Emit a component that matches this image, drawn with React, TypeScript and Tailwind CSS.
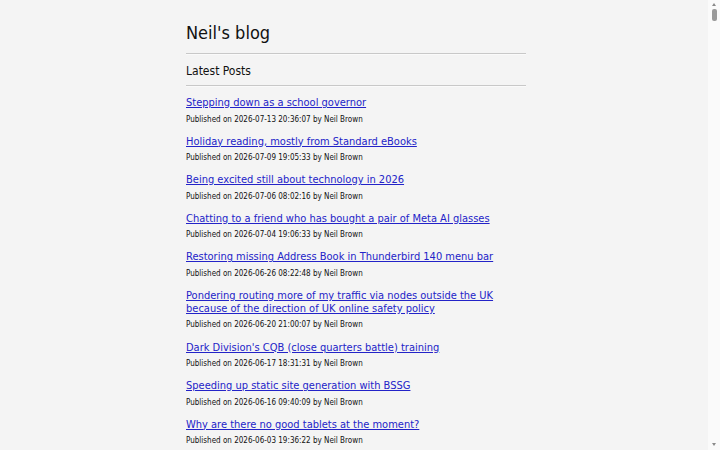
import React from "react";

const posts: [string, string][] = [
  ["Stepping down as a school governor", "2026-07-13 20:36:07"],
  ["Holiday reading, mostly from Standard eBooks", "2026-07-09 19:05:33"],
  ["Being excited still about technology in 2026", "2026-07-06 08:02:16"],
  ["Chatting to a friend who has bought a pair of Meta AI glasses", "2026-07-04 19:06:33"],
  ["Restoring missing Address Book in Thunderbird 140 menu bar", "2026-06-26 08:22:48"],
  ["Pondering routing more of my traffic via nodes outside the UK because of the direction of UK online safety policy", "2026-06-20 21:00:07"],
  ["Dark Division's CQB (close quarters battle) training", "2026-06-17 18:31:31"],
  ["Speeding up static site generation with BSSG", "2026-06-16 09:40:09"],
  ["Why are there no good tablets at the moment?", "2026-06-03 19:36:22"],
  ["Trying out a new keyboard layout", "2026-05-28 10:12:44"],
  ["Notes from a weekend of tinkering", "2026-05-21 17:03:09"],
];

export default function App() {
  return (
    <div className="min-h-screen bg-[#f4f4f4] text-[#111]" style={{ fontFamily: '"DejaVu Sans Condensed", "DejaVu Sans", sans-serif' }}>
      <div className="mx-auto w-[348px] pr-[8px] pt-[21px] pb-10">
        <h1 className="text-[18px] leading-[24px]">Neil's blog</h1>
        <div className="mt-[8px] border-t border-t-[#c8c8c8] border-b border-b-[#fafafa]" />
        <h2 className="mt-[8px] text-[12px] leading-[16px]">Latest Posts</h2>
        <div className="mt-[6px] border-t border-t-[#c8c8c8] border-b border-b-[#fafafa]" />
        <ul className="mt-[9px] flex flex-col gap-[10.1px]">
          {posts.map(([t, d]) => (
            <li key={t} className="flex flex-col gap-[5.5px]">
              <a href="#" className="block text-[11px] leading-[13px] text-[#2323c8] underline">
                {t}
              </a>
              <div className="text-[8px] leading-[10px] text-[#111]">
                Published on {d} by Neil Brown
              </div>
            </li>
          ))}
        </ul>
      </div>
      <div className="fixed right-0 top-0 flex h-screen w-[12px] flex-col items-center bg-[#fafafa] pb-[4px] pt-[3px]">
        <div className="h-0 w-0 border-x-[2.5px] border-b-[3px] border-x-transparent border-b-[#8a8a8a]" />
        <div className="mt-[3px] h-[12px] w-[5px] rounded-[2px] bg-[#9a9a9a]" />
        <div className="flex-1" />
        <div className="h-0 w-0 border-x-[2.5px] border-t-[3px] border-x-transparent border-t-[#8a8a8a]" />
      </div>
    </div>
  );
}
